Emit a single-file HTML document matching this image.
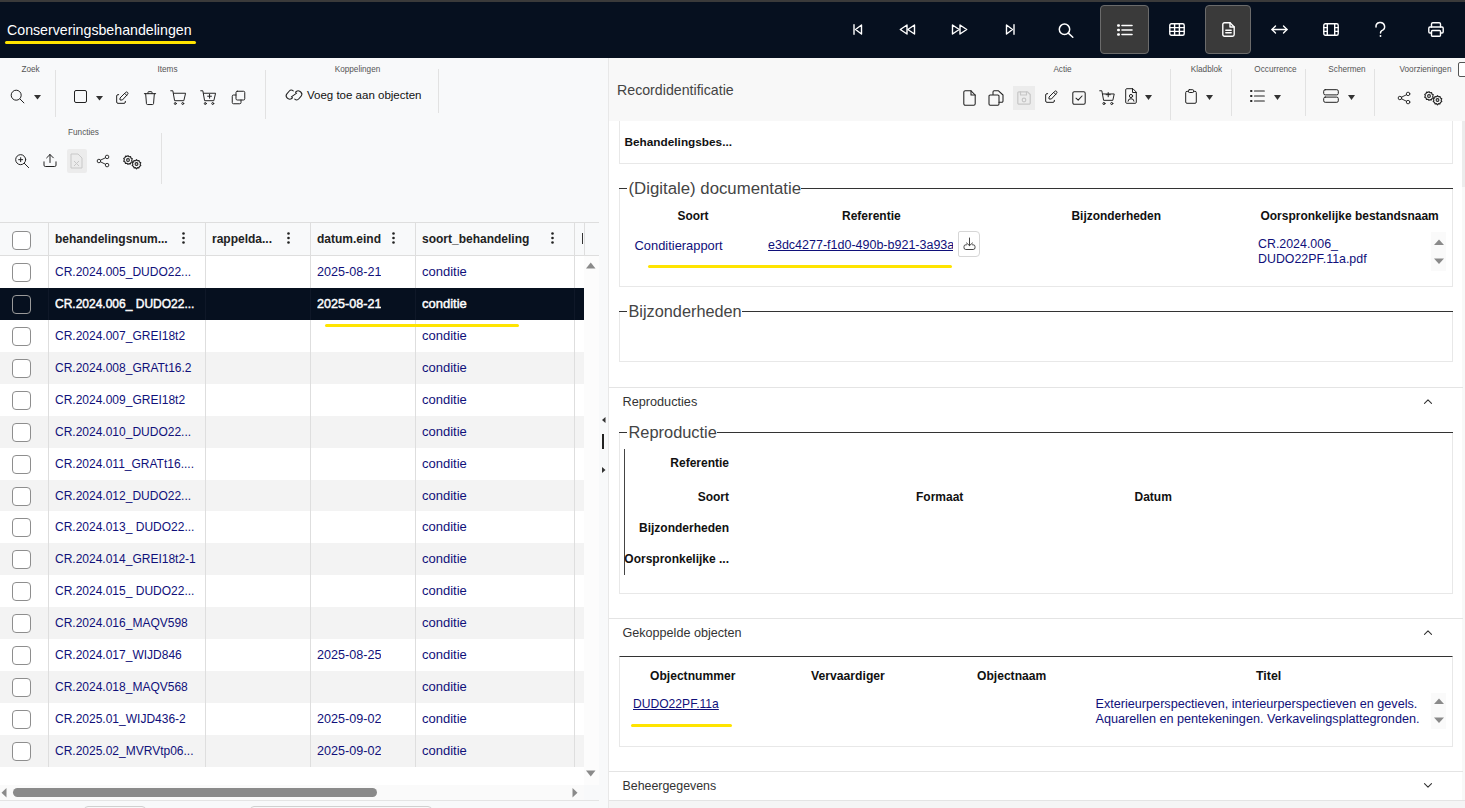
<!DOCTYPE html>
<html><head><meta charset="utf-8">
<style>
*{box-sizing:border-box;margin:0;padding:0}
html,body{width:1465px;height:808px;overflow:hidden;background:#f8f9fa;font-family:"Liberation Sans",sans-serif;position:relative}
.a{position:absolute}
svg{position:absolute;overflow:visible}
.top{left:0;top:0;width:1465px;height:58px;background:#06101f;border-top:2px solid #3a3a3a}
.title{left:7px;top:22px;color:#fff;font-size:14.2px;white-space:nowrap}
.uline{background:#ffe400;border-radius:2px}
.tbtn{top:5px;width:49px;height:49px;border:1px solid #6b6b6b;border-radius:4px;background:#3a3a3a}
.lbl{font-size:8.2px;color:#555;white-space:nowrap;transform:translateX(-50%)}
.sep{width:1px;background:#e2e2e2}
.hdr{font-weight:bold;font-size:12px;color:#222;white-space:nowrap}
.cell{font-size:12.5px;color:#1c1c6e;white-space:nowrap;overflow:hidden;line-height:15px}
.cb{width:18.5px;height:18.5px;border:1.5px solid #8e8e8e;border-radius:4px;background:#fff}
.row{left:0;width:584px;height:32px}
.vl{width:1px;background:#dedede}
.hl{height:1px;background:#dedede}
.b{font-weight:bold;color:#111;font-size:12px;white-space:nowrap;line-height:14px}
.lnk{color:#10107a;font-size:12.5px;white-space:nowrap;line-height:15px}
.leg{font-size:16.5px;color:#444;white-space:nowrap;line-height:19px}
.box{border:1px solid #e8e8e8;background:#fff}
.sect{font-size:12.6px;color:#333;white-space:nowrap;line-height:15px}
.ic{fill:none;stroke-linecap:round;stroke-linejoin:round}
</style></head><body>
<div class="a top"></div>
<div class="a title">Conserveringsbehandelingen</div>
<div class="a uline" style="left:5px;top:41px;width:191px;height:3px"></div>
<div class="a tbtn" style="left:1100px"></div>
<div class="a tbtn" style="left:1205px;width:46px"></div>
<div class="a" style="left:0;top:58px;width:608px;height:750px;background:#f8f9fa"></div>
<!-- LEFT TOOLBAR -->
<div class="a lbl" style="left:30.5px;top:65px">Zoek</div>
<div class="a lbl" style="left:167.5px;top:65px">Items</div>
<div class="a lbl" style="left:357.5px;top:65px">Koppelingen</div>
<div class="a lbl" style="left:83.5px;top:128px">Functies</div>
<div class="a sep" style="left:55px;top:70px;height:47px"></div>
<div class="a sep" style="left:265px;top:70px;height:49px"></div>
<div class="a sep" style="left:438px;top:69px;height:44px"></div>
<div class="a sep" style="left:161px;top:133px;height:51px"></div>
<!-- search -->
<svg style="left:9.5px;top:88.5px" width="16" height="16" viewBox="0 0 16 16" fill="none" stroke="#222" stroke-width="1"><circle cx="6.2" cy="6.2" r="5"/><path d="M9.9 9.9L14.2 14.2"/></svg>
<svg style="left:34px;top:95px" width="8" height="5" viewBox="0 0 8 5"><path d="M0 0H7L3.5 4.5Z" fill="#333"/></svg>
<!-- checkbox -->
<svg style="left:74px;top:89.5px" width="13" height="13" viewBox="0 0 13 13" fill="none" stroke="#222" stroke-width="1"><rect x="0.5" y="0.5" width="12" height="12" rx="1.5"/></svg>
<svg style="left:96px;top:96px" width="8" height="5" viewBox="0 0 8 5"><path d="M0 0H7L3.5 4.5Z" fill="#333"/></svg>
<!-- edit -->
<svg style="left:114px;top:90px" width="16" height="16" viewBox="0 0 24 24" fill="none" stroke="#222" stroke-width="1.5" stroke-linecap="round" stroke-linejoin="round"><path d="M7 7H6a2 2 0 0 0-2 2v9a2 2 0 0 0 2 2h9a2 2 0 0 0 2-2v-1"/><path d="M20.385 6.585a2.1 2.1 0 0 0-2.97-2.97L9 12v3h3z"/><path d="M16 5l3 3"/></svg>
<!-- trash -->
<svg style="left:141.5px;top:90px" width="16" height="16" viewBox="0 0 24 24" fill="none" stroke="#222" stroke-width="1.5" stroke-linecap="round" stroke-linejoin="round"><path d="M3.5 5.5h17"/><path d="M9 5.5V3.5a1 1 0 0 1 1-1h4a1 1 0 0 1 1 1v2"/><path d="M5.5 5.5l1.2 15a1.5 1.5 0 0 0 1.5 1.3h7.6a1.5 1.5 0 0 0 1.5-1.3l1.2-15"/></svg>
<!-- cart -->
<svg style="left:170px;top:89px" width="17" height="17" viewBox="0 0 24 24" fill="none" stroke="#222" stroke-width="1.4" stroke-linecap="round" stroke-linejoin="round"><circle cx="7.5" cy="20.5" r="1.4"/><circle cx="18" cy="20.5" r="1.4"/><path d="M1 2.5h3l2.5 14h13l2.5-10.5H5"/></svg>
<!-- cart plus -->
<svg style="left:200px;top:89px" width="17" height="17" viewBox="0 0 24 24" fill="none" stroke="#222" stroke-width="1.4" stroke-linecap="round" stroke-linejoin="round"><circle cx="7.5" cy="20.5" r="1.4"/><circle cx="18" cy="20.5" r="1.4"/><path d="M1 2.5h3l2.5 14h13l2.5-10.5H5"/><path d="M13.5 7.5v5.5M10.8 10.2h5.4"/></svg>
<!-- copy -->
<svg style="left:230.5px;top:90px" width="15" height="15" viewBox="0 0 24 24" fill="none" stroke="#222" stroke-width="1.6" stroke-linecap="round" stroke-linejoin="round"><rect x="8" y="2" width="14" height="14" rx="2"/><path d="M8 8H4a2 2 0 0 0-2 2v10a2 2 0 0 0 2 2h10a2 2 0 0 0 2-2v-4"/></svg>
<!-- link -->
<svg style="left:285px;top:88px" width="18" height="14" viewBox="0 0 24 18" fill="none" stroke="#222" stroke-width="1.4" stroke-linecap="round"><path d="M10 12.5a4 4 0 0 1-5.5 1.5L3 13a4 4 0 0 1-0.5-5.5l3-3.5a4 4 0 0 1 5.5-0.5"/><path d="M14 5.5a4 4 0 0 1 5.5-1.5L21 5a4 4 0 0 1 0.5 5.5l-3 3.5a4 4 0 0 1-5.5 0.5"/><path d="M8.5 11.5L15.5 6.5"/></svg>
<div class="a" style="left:307px;top:89px;font-size:11.5px;color:#111;white-space:nowrap">Voeg toe aan objecten</div>
<!-- functies row -->
<svg style="left:14px;top:153px" width="16" height="16" viewBox="0 0 24 24" fill="none" stroke="#222" stroke-width="1.5" stroke-linecap="round"><circle cx="10" cy="10" r="7.5"/><path d="M7 10h6M10 7v6M15.5 15.5L22 22"/></svg>
<svg style="left:42px;top:152px" width="16" height="17" viewBox="0 0 24 24" fill="none" stroke="#222" stroke-width="1.5" stroke-linecap="round" stroke-linejoin="round"><path d="M3 14v5a2 2 0 0 0 2 2h14a2 2 0 0 0 2-2v-5"/><path d="M12 3v12M7 8l5-5 5 5"/></svg>
<div class="a" style="left:67px;top:149px;width:20px;height:24px;background:#ececec;border-radius:2px"></div>
<svg style="left:70px;top:153px" width="13" height="16" viewBox="0 0 13 16" fill="none" stroke="#c8c8c8" stroke-width="1"><path d="M1 1h7l4 4v10H1z"/><path d="M4 8l5 5M9 8l-5 5"/></svg>
<svg style="left:96px;top:154px" width="14" height="14" viewBox="0 0 24 24" fill="none" stroke="#222" stroke-width="1.6"><circle cx="5" cy="12" r="3"/><circle cx="19" cy="5" r="3"/><circle cx="19" cy="19" r="3"/><path d="M7.7 10.6l8.6-4.2M7.7 13.4l8.6 4.2"/></svg>
<svg style="left:123px;top:154.5px" width="19" height="14" viewBox="0 0 19 14" class="ic" stroke="#222" stroke-width="1.1"><circle cx="5" cy="5" r="1.4"/><path d="M5 0.6l1 1.2 1.5-.3.4 1.5 1.4.8-.7 1.4.7 1.4-1.4.8-.4 1.5-1.5-.3L5 9.4 4 8.2l-1.5.3-.4-1.5L.7 6.2 1.4 4.8.7 3.4l1.4-.8.4-1.5 1.5.3z"/><circle cx="13.5" cy="9" r="1.4"/><path d="M13.5 4.6l1 1.2 1.5-.3.4 1.5 1.4.8-.7 1.4.7 1.4-1.4.8-.4 1.5-1.5-.3-1 1.2-1-1.2-1.5.3-.4-1.5-1.4-.8.7-1.4-.7-1.4 1.4-.8.4-1.5 1.5.3z"/></svg>



<div class="a" style="left:0;top:222px;width:599px;height:34px;background:#f8f9fa;border-top:1px solid #dedede;border-bottom:1px solid #dedede"></div>
<div class="a row" style="top:256px;background:#fff"></div>
<div class="a row" style="top:288px;background:#06101f"></div>
<div class="a row" style="top:320px;background:#fff"></div>
<div class="a row" style="top:352px;background:#f3f3f3"></div>
<div class="a row" style="top:384px;background:#fff"></div>
<div class="a row" style="top:416px;background:#f3f3f3"></div>
<div class="a row" style="top:448px;background:#fff"></div>
<div class="a row" style="top:480px;background:#f3f3f3"></div>
<div class="a row" style="top:511px;background:#fff"></div>
<div class="a row" style="top:543px;background:#f3f3f3"></div>
<div class="a row" style="top:575px;background:#fff"></div>
<div class="a row" style="top:607px;background:#f3f3f3"></div>
<div class="a row" style="top:639px;background:#fff"></div>
<div class="a row" style="top:671px;background:#f3f3f3"></div>
<div class="a row" style="top:703px;background:#fff"></div>
<div class="a row" style="top:735px;background:#f3f3f3"></div>
<div class="a vl" style="left:48px;top:223px;height:544px"></div>
<div class="a" style="left:48px;top:288px;width:1px;height:32px;background:#0f1828"></div>
<div class="a vl" style="left:205px;top:223px;height:544px"></div>
<div class="a" style="left:205px;top:288px;width:1px;height:32px;background:#0f1828"></div>
<div class="a vl" style="left:310px;top:223px;height:544px"></div>
<div class="a" style="left:310px;top:288px;width:1px;height:32px;background:#0f1828"></div>
<div class="a vl" style="left:415px;top:223px;height:544px"></div>
<div class="a" style="left:415px;top:288px;width:1px;height:32px;background:#0f1828"></div>
<div class="a vl" style="left:574px;top:223px;height:544px"></div>
<div class="a" style="left:574px;top:288px;width:1px;height:32px;background:#0f1828"></div>
<div class="a vl" style="left:584px;top:223px;height:32px"></div>
<div class="a" style="left:584px;top:256px;width:15px;height:529px;background:#fcfcfc"></div>
<svg style="left:586px;top:262px" width="10" height="7" viewBox="0 0 10 7"><path d="M0 6.5H9.5L4.75 0.5Z" fill="#8a8a8a"/></svg>
<div class="a cb" style="left:12px;top:231px"></div>
<div class="a hdr" style="left:55px;top:232px">behandelingsnum...</div>
<svg style="left:182px;top:232px" width="3" height="12" viewBox="0 0 3 12"><circle cx="1.5" cy="1.5" r="1.3" fill="#222"/><circle cx="1.5" cy="6" r="1.3" fill="#222"/><circle cx="1.5" cy="10.5" r="1.3" fill="#222"/></svg>
<div class="a hdr" style="left:212px;top:232px">rappelda...</div>
<svg style="left:287px;top:232px" width="3" height="12" viewBox="0 0 3 12"><circle cx="1.5" cy="1.5" r="1.3" fill="#222"/><circle cx="1.5" cy="6" r="1.3" fill="#222"/><circle cx="1.5" cy="10.5" r="1.3" fill="#222"/></svg>
<div class="a hdr" style="left:317px;top:232px">datum.eind</div>
<svg style="left:392px;top:232px" width="3" height="12" viewBox="0 0 3 12"><circle cx="1.5" cy="1.5" r="1.3" fill="#222"/><circle cx="1.5" cy="6" r="1.3" fill="#222"/><circle cx="1.5" cy="10.5" r="1.3" fill="#222"/></svg>
<div class="a hdr" style="left:422px;top:232px">soort_behandeling</div>
<svg style="left:551px;top:232px" width="3" height="12" viewBox="0 0 3 12"><circle cx="1.5" cy="1.5" r="1.3" fill="#222"/><circle cx="1.5" cy="6" r="1.3" fill="#222"/><circle cx="1.5" cy="10.5" r="1.3" fill="#222"/></svg>
<div class="a" style="left:581.5px;top:233px;width:1.5px;height:11px;background:#333"></div>
<div class="a cb" style="left:12px;top:263px;"></div>
<div class="a cell" style="left:55px;top:264.7px;width:148px;color:#10107a;font-size:12px">CR.2024.005_DUDO22...</div>
<div class="a cell" style="left:317px;top:264.5px;color:#10107a;font-size:12.6px">2025-08-21</div>
<div class="a cell" style="left:422px;top:264px;color:#10107a;font-size:13px">conditie</div>
<div class="a cb" style="left:12px;top:295px;background:#06101f;border-color:#9a9a9a;"></div>
<div class="a cell" style="left:55px;top:296.7px;width:148px;color:#fff;-webkit-text-stroke:0.45px #fff;font-size:12px">CR.2024.006_ DUDO22...</div>
<div class="a cell" style="left:317px;top:296.5px;color:#fff;-webkit-text-stroke:0.45px #fff;font-size:12.6px">2025-08-21</div>
<div class="a cell" style="left:422px;top:296px;color:#fff;-webkit-text-stroke:0.45px #fff;font-size:13px">conditie</div>
<div class="a cb" style="left:12px;top:327px;"></div>
<div class="a cell" style="left:55px;top:328.7px;width:148px;color:#10107a;font-size:12px">CR.2024.007_GREI18t2</div>
<div class="a cell" style="left:422px;top:328px;color:#10107a;font-size:13px">conditie</div>
<div class="a cb" style="left:12px;top:359px;"></div>
<div class="a cell" style="left:55px;top:360.7px;width:148px;color:#10107a;font-size:12px">CR.2024.008_GRATt16.2</div>
<div class="a cell" style="left:422px;top:360px;color:#10107a;font-size:13px">conditie</div>
<div class="a cb" style="left:12px;top:391px;"></div>
<div class="a cell" style="left:55px;top:392.7px;width:148px;color:#10107a;font-size:12px">CR.2024.009_GREI18t2</div>
<div class="a cell" style="left:422px;top:392px;color:#10107a;font-size:13px">conditie</div>
<div class="a cb" style="left:12px;top:423px;"></div>
<div class="a cell" style="left:55px;top:424.7px;width:148px;color:#10107a;font-size:12px">CR.2024.010_DUDO22...</div>
<div class="a cell" style="left:422px;top:424px;color:#10107a;font-size:13px">conditie</div>
<div class="a cb" style="left:12px;top:455px;"></div>
<div class="a cell" style="left:55px;top:456.7px;width:148px;color:#10107a;font-size:12px">CR.2024.011_GRATt16....</div>
<div class="a cell" style="left:422px;top:456px;color:#10107a;font-size:13px">conditie</div>
<div class="a cb" style="left:12px;top:487px;"></div>
<div class="a cell" style="left:55px;top:488.7px;width:148px;color:#10107a;font-size:12px">CR.2024.012_DUDO22...</div>
<div class="a cell" style="left:422px;top:488px;color:#10107a;font-size:13px">conditie</div>
<div class="a cb" style="left:12px;top:518px;"></div>
<div class="a cell" style="left:55px;top:519.7px;width:148px;color:#10107a;font-size:12px">CR.2024.013_ DUDO22...</div>
<div class="a cell" style="left:422px;top:519px;color:#10107a;font-size:13px">conditie</div>
<div class="a cb" style="left:12px;top:550px;"></div>
<div class="a cell" style="left:55px;top:551.7px;width:148px;color:#10107a;font-size:12px">CR.2024.014_GREI18t2-1</div>
<div class="a cell" style="left:422px;top:551px;color:#10107a;font-size:13px">conditie</div>
<div class="a cb" style="left:12px;top:582px;"></div>
<div class="a cell" style="left:55px;top:583.7px;width:148px;color:#10107a;font-size:12px">CR.2024.015_ DUDO22...</div>
<div class="a cell" style="left:422px;top:583px;color:#10107a;font-size:13px">conditie</div>
<div class="a cb" style="left:12px;top:614px;"></div>
<div class="a cell" style="left:55px;top:615.7px;width:148px;color:#10107a;font-size:12px">CR.2024.016_MAQV598</div>
<div class="a cell" style="left:422px;top:615px;color:#10107a;font-size:13px">conditie</div>
<div class="a cb" style="left:12px;top:646px;"></div>
<div class="a cell" style="left:55px;top:647.7px;width:148px;color:#10107a;font-size:12px">CR.2024.017_WIJD846</div>
<div class="a cell" style="left:317px;top:647.5px;color:#10107a;font-size:12.6px">2025-08-25</div>
<div class="a cell" style="left:422px;top:647px;color:#10107a;font-size:13px">conditie</div>
<div class="a cb" style="left:12px;top:678px;"></div>
<div class="a cell" style="left:55px;top:679.7px;width:148px;color:#10107a;font-size:12px">CR.2024.018_MAQV568</div>
<div class="a cell" style="left:422px;top:679px;color:#10107a;font-size:13px">conditie</div>
<div class="a cb" style="left:12px;top:710px;"></div>
<div class="a cell" style="left:55px;top:711.7px;width:148px;color:#10107a;font-size:12px">CR.2025.01_WIJD436-2</div>
<div class="a cell" style="left:317px;top:711.5px;color:#10107a;font-size:12.6px">2025-09-02</div>
<div class="a cell" style="left:422px;top:711px;color:#10107a;font-size:13px">conditie</div>
<div class="a cb" style="left:12px;top:742px;"></div>
<div class="a cell" style="left:55px;top:743.7px;width:148px;color:#10107a;font-size:12px">CR.2025.02_MVRVtp06...</div>
<div class="a cell" style="left:317px;top:743.5px;color:#10107a;font-size:12.6px">2025-09-02</div>
<div class="a cell" style="left:422px;top:743px;color:#10107a;font-size:13px">conditie</div>
<div class="a uline" style="left:325px;top:324px;width:194px;height:3px"></div>
<div class="a" style="left:0;top:767px;width:584px;height:18px;background:#fff"></div>
<div class="a" style="left:0;top:785px;width:584px;height:15px;background:#fafafa"></div>
<svg style="left:586px;top:770px" width="10" height="7" viewBox="0 0 10 7"><path d="M0 0.5H9.5L4.75 6.5Z" fill="#8a8a8a"/></svg>
<div class="a" style="left:13px;top:788px;width:364px;height:9px;background:#8a8a8a;border-radius:5px"></div>
<svg style="left:1px;top:788px" width="6" height="10" viewBox="0 0 6 10"><path d="M5.5 0V9.5L0.5 4.75Z" fill="#8a8a8a"/></svg>
<svg style="left:572px;top:788px" width="6" height="10" viewBox="0 0 6 10"><path d="M0.5 0V9.5L5.5 4.75Z" fill="#8a8a8a"/></svg>
<div class="a hl" style="left:0;top:800px;width:599px;background:#e4e4e4"></div>
<div class="a" style="left:84px;top:806px;width:62px;height:10px;border:1px solid #d0d0d0;border-radius:4px"></div>
<div class="a" style="left:250px;top:806px;width:182px;height:10px;border:1px solid #d0d0d0;border-radius:4px"></div>
<svg style="left:602px;top:416.5px" width="4" height="6" viewBox="0 0 4 6"><path d="M3.5 0V6L0 3Z" fill="#333"/></svg>
<div class="a" style="left:602px;top:434px;width:2px;height:15px;background:#222"></div>
<svg style="left:602px;top:466.5px" width="4" height="6" viewBox="0 0 4 6"><path d="M0 0V6L3.5 3Z" fill="#333"/></svg>
<div class="a" style="left:608px;top:58px;width:857px;height:750px;background:#f8f8f8;border-left:1px solid #e8e8e8"></div>
<div class="a" style="left:609px;top:121px;width:853px;height:679px;background:#fff"></div>
<div class="a" style="left:1462px;top:121px;width:3px;height:66px;background:#ececec"></div>
<div class="a" style="left:1461px;top:66px;width:1px;height:55px;background:#e2e2e2"></div>
<div class="a box" style="left:619px;top:110px;width:834px;height:54px;border-top:none"></div>
<div class="a" style="left:609px;top:58px;width:853px;height:63px;background:#f8f8f8"></div>
<div class="a b" style="left:624.5px;top:135px;font-size:11.8px">Behandelingsbes...</div>
<div class="a" style="left:617px;top:82px;font-size:14.2px;color:#444;white-space:nowrap">Recordidentificatie</div>
<div class="a box" style="left:619px;top:188px;width:834px;height:99px;border-top:none"></div>
<div class="a" style="left:619px;top:188px;width:834px;height:1px;background:#333"></div>
<div class="a" style="left:627px;top:180px;width:174px;height:16px;background:#fff"></div>
<div class="a leg" style="left:628.5px;top:178.5px;font-size:16.8px">(Digitale) documentatie</div>
<div class="a b" style="left:677.5px;top:209px;font-size:11.9px">Soort</div>
<div class="a b" style="left:842px;top:209px;font-size:12px">Referentie</div>
<div class="a b" style="left:1071.5px;top:209px;font-size:11.95px">Bijzonderheden</div>
<div class="a b" style="left:1260.5px;top:209px;font-size:11.98px">Oorspronkelijke bestandsnaam</div>
<div class="a lnk" style="left:634.5px;top:238px;font-size:12.9px">Conditierapport</div>
<div class="a lnk" style="left:768px;top:238px;width:185px;overflow:hidden;text-decoration:underline;font-size:12.5px">e3dc4277-f1d0-490b-b921-3a93a</div>
<div class="a" style="left:958px;top:231px;width:22px;height:26px;border:1px solid #d6d6d6;border-radius:2px 4px 4px 2px;background:#fff"></div>
<svg style="left:963px;top:237px" width="13" height="13" viewBox="0 0 13 13" class="ic" stroke="#444" stroke-width="1"><path d="M6.5 1V8.5M3.5 6L6.5 8.6L9.5 6"/><path d="M3.5 7.8H2.8A1.8 1.8 0 0 0 1 9.6V10.7A1.8 1.8 0 0 0 2.8 12.5H10.2A1.8 1.8 0 0 0 12 10.7V9.6A1.8 1.8 0 0 0 10.2 7.8H9.5"/></svg>
<div class="a uline" style="left:648px;top:264.5px;width:304px;height:3px"></div>
<div class="a lnk" style="left:1258px;top:237px;font-size:12.4px;line-height:14.5px">CR.2024.006_<br>DUDO22PF.11a.pdf</div>
<div class="a" style="left:1431px;top:232px;width:15px;height:39px;background:#fafafa"></div>
<svg style="left:1433.5px;top:238.5px" width="10" height="7" viewBox="0 0 10 7"><path d="M0 6H10L5 0.5Z" fill="#8a8a8a"/></svg>
<svg style="left:1433.5px;top:257.5px" width="10" height="7" viewBox="0 0 10 7"><path d="M0 0.5H10L5 6Z" fill="#8a8a8a"/></svg>
<div class="a box" style="left:619px;top:311px;width:834px;height:51px;border-top:none"></div>
<div class="a" style="left:619px;top:311px;width:834px;height:1px;background:#333"></div>
<div class="a" style="left:627px;top:303px;width:115px;height:16px;background:#fff"></div>
<div class="a leg" style="left:628.5px;top:301.5px;font-size:16.3px">Bijzonderheden</div>
<div class="a" style="left:609px;top:387px;width:854px;height:1px;background:#e4e4e4"></div>
<div class="a sect" style="left:622.5px;top:395px;font-size:12.7px">Reproducties</div>
<svg style="left:1422.5px;top:398.0px" width="10" height="7" viewBox="0 0 10 7" class="ic" stroke="#333" stroke-width="1.1"><path d="M1.5 5.3L5 1.8L8.5 5.3"/></svg>
<div class="a box" style="left:619px;top:432px;width:834px;height:162px;border-top:none"></div>
<div class="a" style="left:619px;top:432px;width:834px;height:1px;background:#333"></div>
<div class="a" style="left:627px;top:424px;width:90px;height:16px;background:#fff"></div>
<div class="a leg" style="left:628.5px;top:422.5px;font-size:16.4px">Reproductie</div>
<div class="a" style="left:624px;top:449px;width:1px;height:126px;background:#444"></div>
<div class="a b" style="left:429px;width:300px;text-align:right;top:455.5px;font-size:12px">Referentie</div>
<div class="a b" style="left:429px;width:300px;text-align:right;top:489.5px;font-size:12px">Soort</div>
<div class="a b" style="left:429px;width:300px;text-align:right;top:520.5px;font-size:12px">Bijzonderheden</div>
<div class="a b" style="left:429px;width:300px;text-align:right;top:552px;font-size:12px">Oorspronkelijke ...</div>
<div class="a b" style="left:916px;top:489.5px">Formaat</div>
<div class="a b" style="left:1134.5px;top:489.5px">Datum</div>
<div class="a" style="left:609px;top:618px;width:854px;height:1px;background:#e4e4e4"></div>
<div class="a sect" style="left:622.5px;top:626px;font-size:12.6px">Gekoppelde objecten</div>
<svg style="left:1422.5px;top:629.0px" width="10" height="7" viewBox="0 0 10 7" class="ic" stroke="#333" stroke-width="1.1"><path d="M1.5 5.3L5 1.8L8.5 5.3"/></svg>
<div class="a box" style="left:619px;top:656px;width:834px;height:91px;border-top:1px solid #333"></div>
<div class="a b" style="left:650px;top:668.5px;font-size:12.1px">Objectnummer</div>
<div class="a b" style="left:811px;top:668.5px;font-size:12.2px">Vervaardiger</div>
<div class="a b" style="left:977px;top:668.5px;font-size:12.1px">Objectnaam</div>
<div class="a b" style="left:1256px;top:668.5px;font-size:12.4px">Titel</div>
<div class="a lnk" style="left:633px;top:697px;font-size:12.1px;text-decoration:underline">DUDO22PF.11a</div>
<div class="a uline" style="left:630.5px;top:723.5px;width:101px;height:3px"></div>
<div class="a lnk" style="left:1095.5px;top:696.5px;font-size:12.65px;line-height:15px">Exterieurperspectieven, interieurperspectieven en gevels.<br>Aquarellen en pentekeningen. Verkavelingsplattegronden.</div>
<div class="a" style="left:1431px;top:692.5px;width:15px;height:36.5px;background:#fafafa"></div>
<svg style="left:1433.5px;top:697.75px" width="10" height="7" viewBox="0 0 10 7"><path d="M0 6H10L5 0.5Z" fill="#8a8a8a"/></svg>
<svg style="left:1433.5px;top:716.75px" width="10" height="7" viewBox="0 0 10 7"><path d="M0 0.5H10L5 6Z" fill="#8a8a8a"/></svg>
<div class="a" style="left:609px;top:771px;width:854px;height:1px;background:#e4e4e4"></div>
<div class="a sect" style="left:622.5px;top:779px;font-size:12.4px">Beheergegevens</div>
<svg style="left:1422.5px;top:782.0px" width="10" height="7" viewBox="0 0 10 7" class="ic" stroke="#333" stroke-width="1.1"><path d="M1.5 1.7L5 5.2L8.5 1.7"/></svg>
<div class="a" style="left:609px;top:800px;width:856px;height:8px;background:#f5f5f5;border-top:1px solid #e4e4e4"></div>
<!-- RIGHT TOOLBAR -->
<div class="a lbl" style="left:1062.5px;top:65px">Actie</div>
<div class="a lbl" style="left:1206.5px;top:65px">Kladblok</div>
<div class="a lbl" style="left:1275.5px;top:65px">Occurrence</div>
<div class="a lbl" style="left:1347px;top:65px">Schermen</div>
<div class="a lbl" style="left:1425.5px;top:65px">Voorzieningen</div>
<div class="a sep" style="left:1170px;top:69px;height:51px"></div>
<div class="a sep" style="left:1231px;top:69px;height:47px"></div>
<div class="a sep" style="left:1305px;top:69px;height:47px"></div>
<div class="a sep" style="left:1374px;top:69px;height:47px"></div>
<div class="a" style="left:1458px;top:62px;width:10px;height:15px;border:1px solid #555;border-radius:2px;background:#fff"></div>
<!-- new doc -->
<svg style="left:963px;top:90px" width="13" height="16" viewBox="0 0 13 16" class="ic" stroke="#222" stroke-width="1.05"><path d="M8 0.8H2.3A1.5 1.5 0 0 0 0.8 2.3V13.7A1.5 1.5 0 0 0 2.3 15.2H10.7A1.5 1.5 0 0 0 12.2 13.7V5Z"/><path d="M8 0.8V5H12.2"/></svg>
<!-- copy -->
<svg style="left:988px;top:90px" width="16" height="16" viewBox="0 0 16 16" class="ic" stroke="#222" stroke-width="1.05"><path d="M5 4.5V2A1.2 1.2 0 0 1 6.2 0.8H10.5L15 5V11A1.2 1.2 0 0 1 13.8 12.2H11"/><path d="M1 6.3A1.2 1.2 0 0 1 2.2 5H9.8A1.2 1.2 0 0 1 11 6.3V14A1.2 1.2 0 0 1 9.8 15.2H2.2A1.2 1.2 0 0 1 1 14Z"/></svg>
<!-- save disabled -->
<div class="a" style="left:1013px;top:86px;width:22px;height:24px;background:#ececec"></div>
<svg style="left:1017px;top:91px" width="14" height="14" viewBox="0 0 14 14" class="ic" stroke="#c6c6c6" stroke-width="1.2"><path d="M2 0.8H10.5L13.2 3.5V12A1.2 1.2 0 0 1 12 13.2H2A1.2 1.2 0 0 1 0.8 12V2A1.2 1.2 0 0 1 2 0.8Z"/><path d="M3.5 0.8V4H9.5V0.8"/><circle cx="7" cy="9" r="1.8"/></svg>
<!-- edit -->
<svg style="left:1043px;top:89px" width="16" height="16" viewBox="0 0 24 24" class="ic" stroke="#222" stroke-width="1.5"><path d="M7 7H6a2 2 0 0 0-2 2v9a2 2 0 0 0 2 2h9a2 2 0 0 0 2-2v-1"/><path d="M20.385 6.585a2.1 2.1 0 0 0-2.97-2.97L9 12v3h3z"/><path d="M16 5l3 3"/></svg>
<!-- check square -->
<svg style="left:1072px;top:91px" width="14" height="14" viewBox="0 0 14 14" class="ic" stroke="#222" stroke-width="1.05"><rect x="0.8" y="0.8" width="12.4" height="12.4" rx="1.5"/><path d="M4 7.2L6.2 9.2L10 5"/></svg>
<!-- cart plus -->
<svg style="left:1099px;top:89px" width="17" height="17" viewBox="0 0 24 24" class="ic" stroke="#222" stroke-width="1.4"><circle cx="7" cy="20.5" r="1.5"/><circle cx="18" cy="20.5" r="1.5"/><path d="M1 2.5h3l2.5 13.5h13l2-9H5"/><path d="M13 5v6M10 8h6"/></svg>
<!-- person doc -->
<svg style="left:1125px;top:88px" width="12" height="16" viewBox="0 0 12 16" class="ic" stroke="#222" stroke-width="1"><path d="M7.5 0.7H1.8A1.1 1.1 0 0 0 0.7 1.8V14.2A1.1 1.1 0 0 0 1.8 15.3H10.2A1.1 1.1 0 0 0 11.3 14.2V4.5Z"/><path d="M7.5 0.7V4.5H11.3"/><circle cx="6" cy="8" r="1.6"/><path d="M3 13.2A3 2.5 0 0 1 9 13.2"/></svg>
<svg style="left:1145px;top:95px" width="7" height="5" viewBox="0 0 7 5"><path d="M0 0H7L3.5 5Z" fill="#333"/></svg>
<!-- clipboard -->
<svg style="left:1184.5px;top:88.5px" width="12" height="15" viewBox="0 0 12 15" class="ic" stroke="#222" stroke-width="1"><path d="M3.5 2.3H2A1.3 1.3 0 0 0 0.7 3.6V13A1.3 1.3 0 0 0 2 14.3H10A1.3 1.3 0 0 0 11.3 13V3.6A1.3 1.3 0 0 0 10 2.3H8.5"/><rect x="3.5" y="0.7" width="5" height="2.8" rx="0.8"/></svg>
<svg style="left:1206px;top:95px" width="7" height="5" viewBox="0 0 7 5"><path d="M0 0H7L3.5 5Z" fill="#333"/></svg>
<!-- list -->
<svg style="left:1250px;top:89.5px" width="15" height="12" viewBox="0 0 15 12" class="ic" stroke="#222" stroke-width="1.2"><path d="M4.5 1H14.3M4.5 6H14.3M4.5 11H14.3"/><path d="M1 1h0.5M1 6h0.5M1 11h0.5" stroke-width="2"/></svg>
<svg style="left:1274px;top:95px" width="7" height="5" viewBox="0 0 7 5"><path d="M0 0H7L3.5 5Z" fill="#333"/></svg>
<!-- rows -->
<svg style="left:1323px;top:89px" width="16" height="14" viewBox="0 0 16 14" class="ic" stroke="#222" stroke-width="1"><rect x="0.7" y="0.7" width="14.6" height="5.2" rx="1.5"/><rect x="0.7" y="8.1" width="14.6" height="5.2" rx="1.5"/></svg>
<svg style="left:1348px;top:95px" width="7" height="5" viewBox="0 0 7 5"><path d="M0 0H7L3.5 5Z" fill="#333"/></svg>
<!-- share -->
<svg style="left:1397px;top:91px" width="14" height="14" viewBox="0 0 24 24" class="ic" stroke="#222" stroke-width="1.6"><circle cx="5" cy="12" r="3"/><circle cx="19" cy="5" r="3"/><circle cx="19" cy="19" r="3"/><path d="M7.7 10.6l8.6-4.2M7.7 13.4l8.6 4.2"/></svg>
<!-- gears -->
<svg style="left:1424px;top:90.5px" width="19" height="14" viewBox="0 0 19 14" class="ic" stroke="#222" stroke-width="1.1"><circle cx="5" cy="5" r="1.4"/><path d="M5 0.6l1 1.2 1.5-.3.4 1.5 1.4.8-.7 1.4.7 1.4-1.4.8-.4 1.5-1.5-.3L5 9.4 4 8.2l-1.5.3-.4-1.5L.7 6.2 1.4 4.8.7 3.4l1.4-.8.4-1.5 1.5.3z"/><circle cx="13.5" cy="9" r="1.4"/><path d="M13.5 4.6l1 1.2 1.5-.3.4 1.5 1.4.8-.7 1.4.7 1.4-1.4.8-.4 1.5-1.5-.3-1 1.2-1-1.2-1.5.3-.4-1.5-1.4-.8.7-1.4-.7-1.4 1.4-.8.4-1.5 1.5.3z"/></svg>

<!-- TOP ICONS -->
<svg style="left:853px;top:24px" width="10" height="11" viewBox="0 0 10 11" class="ic" stroke="#fff" stroke-width="1.4"><path d="M1 0.7V10.3"/><path d="M8.5 1L2.5 5.5L8.5 10Z"/></svg>
<svg style="left:899px;top:24px" width="17" height="11" viewBox="0 0 17 11" class="ic" stroke="#fff" stroke-width="1.4"><path d="M8 1L1.3 5.5L8 10Z"/><path d="M15.5 1L8.8 5.5L15.5 10Z"/></svg>
<svg style="left:951px;top:24px" width="17" height="11" viewBox="0 0 17 11" class="ic" stroke="#fff" stroke-width="1.4"><path d="M1.5 1L8.2 5.5L1.5 10Z"/><path d="M9 1L15.7 5.5L9 10Z"/></svg>
<svg style="left:1005px;top:24px" width="10" height="11" viewBox="0 0 10 11" class="ic" stroke="#fff" stroke-width="1.4"><path d="M9 0.7V10.3"/><path d="M1.5 1L7.5 5.5L1.5 10Z"/></svg>
<svg style="left:1058px;top:22.5px" width="16" height="15" viewBox="0 0 16 15" class="ic" stroke="#fff" stroke-width="1.5"><circle cx="6.5" cy="6.3" r="5.2"/><path d="M10.3 10.1L14.8 14.3"/></svg>
<svg style="left:1117px;top:23.5px" width="16" height="12" viewBox="0 0 16 12" class="ic" stroke="#fff" stroke-width="1.6"><path d="M5 1.5H15M5 6H15M5 10.5H15"/><path d="M1.2 1.5h0.6M1.2 6h0.6M1.2 10.5h0.6" stroke-width="2.4"/></svg>
<svg style="left:1168.5px;top:23px" width="16" height="13" viewBox="0 0 16 13" class="ic" stroke="#fff" stroke-width="1.4"><rect x="0.8" y="0.8" width="14.4" height="11.4" rx="1.5"/><path d="M0.8 4.6H15.2M0.8 8.4H15.2M5.6 0.8V12.2M10.4 0.8V12.2"/></svg>
<svg style="left:1221.5px;top:22px" width="13" height="15" viewBox="0 0 13 15" class="ic" stroke="#fff" stroke-width="1.4"><path d="M8 0.8H2.5A1.7 1.7 0 0 0 0.8 2.5V12.5A1.7 1.7 0 0 0 2.5 14.2H10.5A1.7 1.7 0 0 0 12.2 12.5V5Z"/><path d="M8 0.8V5H12.2"/><path d="M3.8 8.2H9.2M3.8 10.8H9.2"/></svg>
<svg style="left:1270.5px;top:25px" width="17" height="9" viewBox="0 0 17 9" class="ic" stroke="#fff" stroke-width="1.4"><path d="M1 4.5H16"/><path d="M4.5 1L1 4.5L4.5 8M12.5 1L16 4.5L12.5 8"/></svg>
<svg style="left:1323px;top:23px" width="16" height="13" viewBox="0 0 16 13" class="ic" stroke="#fff" stroke-width="1.4"><rect x="0.8" y="0.8" width="14.4" height="11.4" rx="1.5"/><path d="M4.3 0.8V12.2M11.7 0.8V12.2M0.8 4.6H4.3M0.8 8.4H4.3M11.7 4.6H15.2M11.7 8.4H15.2"/></svg>
<svg style="left:1375px;top:22.5px" width="11" height="14" viewBox="0 0 11 14" class="ic" stroke="#fff" stroke-width="1.5"><path d="M1 4A4.3 4.2 0 1 1 6.8 7.6C5.8 8.2 5.5 8.8 5.5 10"/><path d="M5.5 12.8V13" stroke-width="1.8"/></svg>
<svg style="left:1428px;top:22px" width="16" height="15" viewBox="0 0 16 15" class="ic" stroke="#fff" stroke-width="1.4"><path d="M3.5 5V2A1.3 1.3 0 0 1 4.8 0.8H11.2A1.3 1.3 0 0 1 12.5 2V5"/><path d="M3.5 11H2A1.3 1.3 0 0 1 0.8 9.7V6.3A1.3 1.3 0 0 1 2 5H14A1.3 1.3 0 0 1 15.2 6.3V9.7A1.3 1.3 0 0 1 14 11H12.5"/><rect x="3.5" y="8.5" width="9" height="5.7" rx="1"/></svg>

</body></html>
